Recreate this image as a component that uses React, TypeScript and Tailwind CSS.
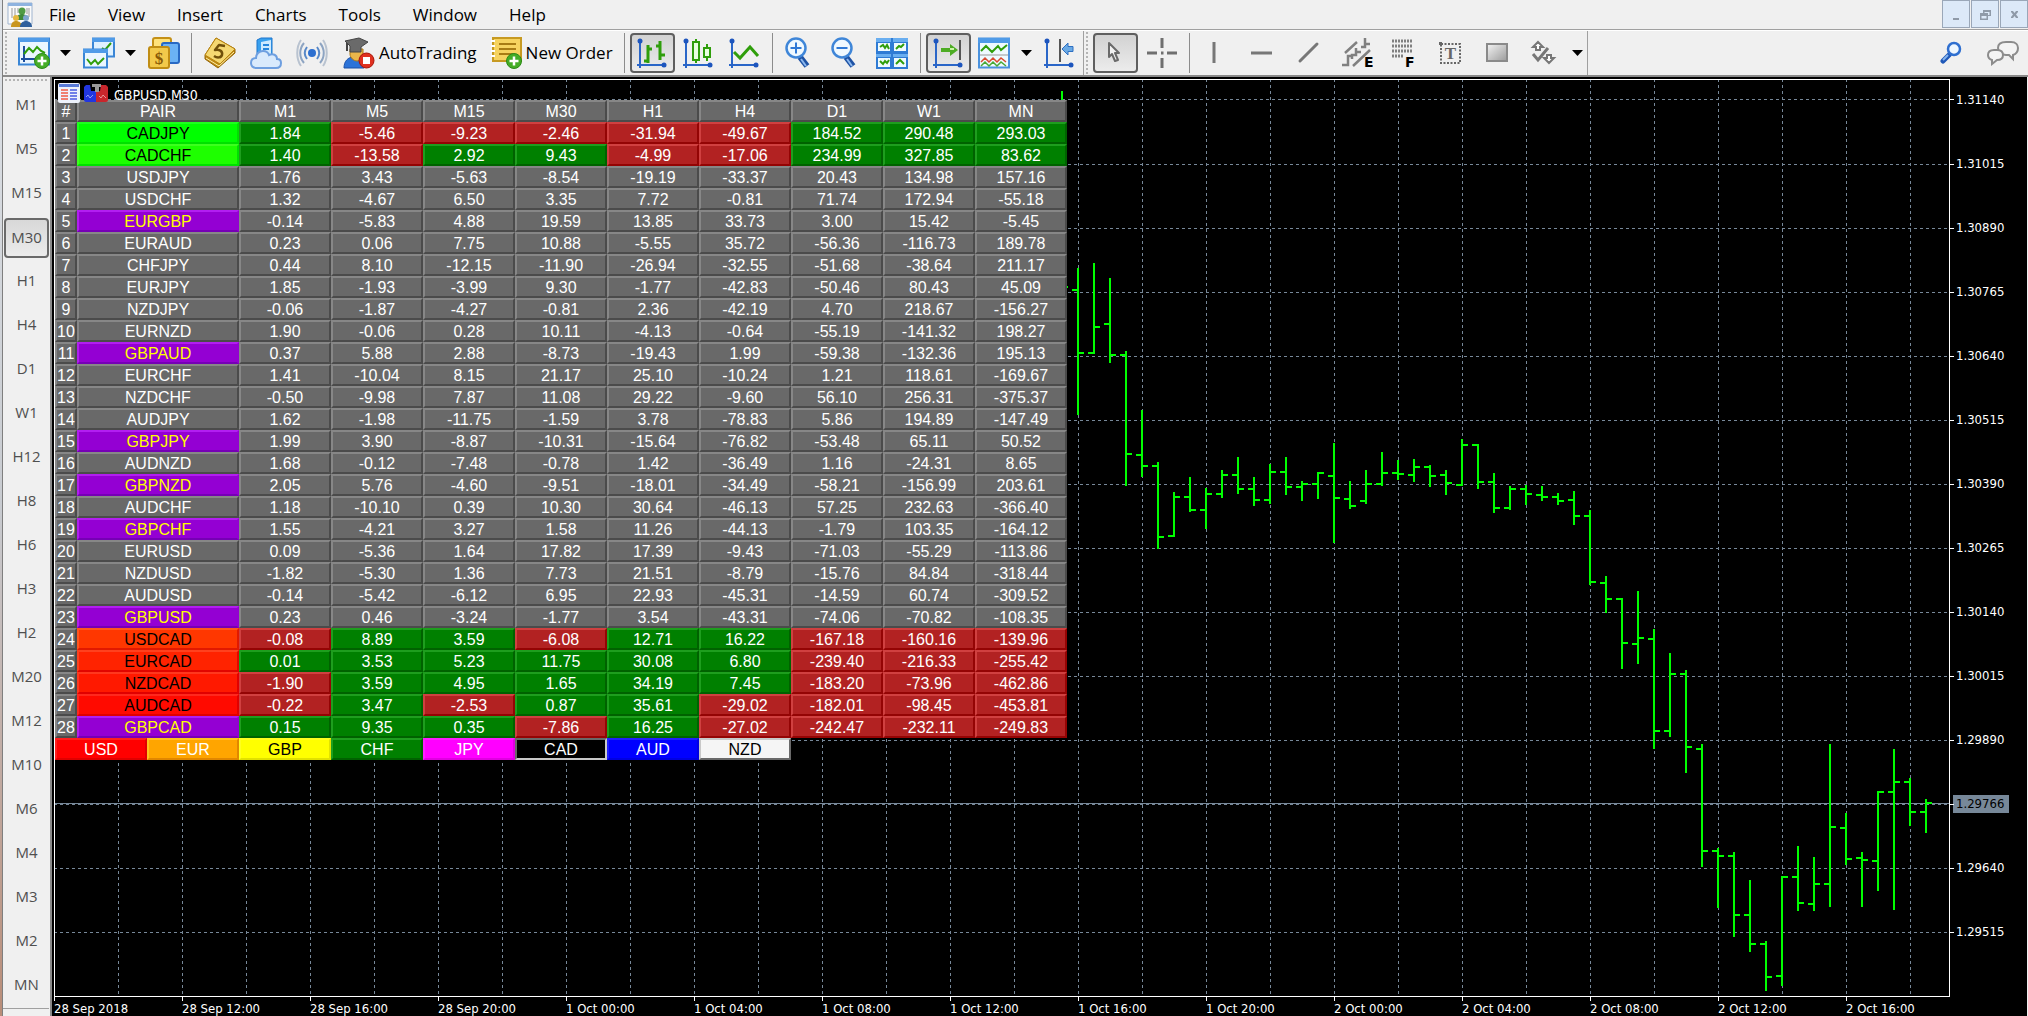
import { ReactNode } from "react";

type Tone = "flat" | "signal";
type PairRow = { pair: string; style: string; tone: Tone; values: string };

const GREY = "bg-[#696969] border-t-[#878787] border-l-[#878787] border-b-[#4b4b4b] border-r-[#4b4b4b] text-white";
const GREEN = "bg-[#008000] border-t-[#1e9e1e] border-l-[#1e9e1e] border-b-[#006200] border-r-[#006200] text-white";
const RED = "bg-[#b22222] border-t-[#d04040] border-l-[#d04040] border-b-[#940404] border-r-[#940404] text-white";
const PURPLE = "bg-[#9400d3] border-t-[#b21ef1] border-l-[#b21ef1] border-b-[#7600b5] border-r-[#9400d3] text-[#ffff00]";

const columns = ["M1", "M5", "M15", "M30", "H1", "H4", "D1", "W1", "MN"];

const rows: PairRow[] = [
    { pair: "CADJPY", tone: "signal", style: "bg-[#00ff00] border-t-[#1eff1e] border-l-[#1eff1e] border-b-[#00e100] border-r-[#00e100] text-black", values: "1.84 -5.46 -9.23 -2.46 -31.94 -49.67 184.52 290.48 293.03" },
    { pair: "CADCHF", tone: "signal", style: "bg-[#1eff00] border-t-[#3cff1e] border-l-[#3cff1e] border-b-[#00e100] border-r-[#00e100] text-black", values: "1.40 -13.58 2.92 9.43 -4.99 -17.06 234.99 327.85 83.62" },
    { pair: "USDJPY", tone: "flat", style: GREY, values: "1.76 3.43 -5.63 -8.54 -19.19 -33.37 20.43 134.98 157.16" },
    { pair: "USDCHF", tone: "flat", style: GREY, values: "1.32 -4.67 6.50 3.35 7.72 -0.81 71.74 172.94 -55.18" },
    { pair: "EURGBP", tone: "flat", style: PURPLE, values: "-0.14 -5.83 4.88 19.59 13.85 33.73 3.00 15.42 -5.45" },
    { pair: "EURAUD", tone: "flat", style: GREY, values: "0.23 0.06 7.75 10.88 -5.55 35.72 -56.36 -116.73 189.78" },
    { pair: "CHFJPY", tone: "flat", style: GREY, values: "0.44 8.10 -12.15 -11.90 -26.94 -32.55 -51.68 -38.64 211.17" },
    { pair: "EURJPY", tone: "flat", style: GREY, values: "1.85 -1.93 -3.99 9.30 -1.77 -42.83 -50.46 80.43 45.09" },
    { pair: "NZDJPY", tone: "flat", style: GREY, values: "-0.06 -1.87 -4.27 -0.81 2.36 -42.19 4.70 218.67 -156.27" },
    { pair: "EURNZD", tone: "flat", style: GREY, values: "1.90 -0.06 0.28 10.11 -4.13 -0.64 -55.19 -141.32 198.27" },
    { pair: "GBPAUD", tone: "flat", style: PURPLE, values: "0.37 5.88 2.88 -8.73 -19.43 1.99 -59.38 -132.36 195.13" },
    { pair: "EURCHF", tone: "flat", style: GREY, values: "1.41 -10.04 8.15 21.17 25.10 -10.24 1.21 118.61 -169.67" },
    { pair: "NZDCHF", tone: "flat", style: GREY, values: "-0.50 -9.98 7.87 11.08 29.22 -9.60 56.10 256.31 -375.37" },
    { pair: "AUDJPY", tone: "flat", style: GREY, values: "1.62 -1.98 -11.75 -1.59 3.78 -78.83 5.86 194.89 -147.49" },
    { pair: "GBPJPY", tone: "flat", style: PURPLE, values: "1.99 3.90 -8.87 -10.31 -15.64 -76.82 -53.48 65.11 50.52" },
    { pair: "AUDNZD", tone: "flat", style: GREY, values: "1.68 -0.12 -7.48 -0.78 1.42 -36.49 1.16 -24.31 8.65" },
    { pair: "GBPNZD", tone: "flat", style: PURPLE, values: "2.05 5.76 -4.60 -9.51 -18.01 -34.49 -58.21 -156.99 203.61" },
    { pair: "AUDCHF", tone: "flat", style: GREY, values: "1.18 -10.10 0.39 10.30 30.64 -46.13 57.25 232.63 -366.40" },
    { pair: "GBPCHF", tone: "flat", style: PURPLE, values: "1.55 -4.21 3.27 1.58 11.26 -44.13 -1.79 103.35 -164.12" },
    { pair: "EURUSD", tone: "flat", style: GREY, values: "0.09 -5.36 1.64 17.82 17.39 -9.43 -71.03 -55.29 -113.86" },
    { pair: "NZDUSD", tone: "flat", style: GREY, values: "-1.82 -5.30 1.36 7.73 21.51 -8.79 -15.76 84.84 -318.44" },
    { pair: "AUDUSD", tone: "flat", style: GREY, values: "-0.14 -5.42 -6.12 6.95 22.93 -45.31 -14.59 60.74 -309.52" },
    { pair: "GBPUSD", tone: "flat", style: PURPLE, values: "0.23 0.46 -3.24 -1.77 3.54 -43.31 -74.06 -70.82 -108.35" },
    { pair: "USDCAD", tone: "signal", style: "bg-[#ff3700] border-t-[#ff551e] border-l-[#ff551e] border-b-[#e11900] border-r-[#e11900] text-black", values: "-0.08 8.89 3.59 -6.08 12.71 16.22 -167.18 -160.16 -139.96" },
    { pair: "EURCAD", tone: "signal", style: "bg-[#ff2300] border-t-[#ff411e] border-l-[#ff411e] border-b-[#e10500] border-r-[#e10500] text-black", values: "0.01 3.53 5.23 11.75 30.08 6.80 -239.40 -216.33 -255.42" },
    { pair: "NZDCAD", tone: "signal", style: "bg-[#ff1900] border-t-[#ff371e] border-l-[#ff371e] border-b-[#e10000] border-r-[#e10000] text-black", values: "-1.90 3.59 4.95 1.65 34.19 7.45 -183.20 -73.96 -462.86" },
    { pair: "AUDCAD", tone: "signal", style: "bg-[#ff0a00] border-t-[#ff281e] border-l-[#ff281e] border-b-[#e10000] border-r-[#e10000] text-black", values: "-0.22 3.47 -2.53 0.87 35.61 -29.02 -182.01 -98.45 -453.81" },
    { pair: "GBPCAD", tone: "signal", style: PURPLE, values: "0.15 9.35 0.35 -7.86 16.25 -27.02 -242.47 -232.11 -249.83" },
];

const currencies = [
    { name: "USD", style: "bg-[#ff0000] border-t-[#ff1e1e] border-l-[#ff1e1e] border-b-[#e10000] border-r-[#e10000] text-white" },
    { name: "EUR", style: "bg-[#ffa500] border-t-[#ffc31e] border-l-[#ffc31e] border-b-[#e18700] border-r-[#e18700] text-white" },
    { name: "GBP", style: "bg-[#ffff00] border-t-[#ffff1e] border-l-[#ffff1e] border-b-[#e1e100] border-r-[#e1e100] text-black" },
    { name: "CHF", style: GREEN },
    { name: "JPY", style: "bg-[#ff00ff] border-t-[#ff1eff] border-l-[#ff1eff] border-b-[#e100e1] border-r-[#e100e1] text-white" },
    { name: "CAD", style: "bg-black border-t-[#696969] border-l-[#696969] border-b-[#c8c8c8] border-r-[#c8c8c8] text-white" },
    { name: "AUD", style: "bg-[#0000ff] border-t-[#1e1eff] border-l-[#1e1eff] border-b-[#0000e1] border-r-[#0000e1] text-white" },
    { name: "NZD", style: "bg-[#f5f5f5] border-t-[#c8c8c8] border-l-[#c8c8c8] border-b-[#696969] border-r-[#696969] text-black" },
];

const timeframes = ["M1", "M5", "M15", "M30", "H1", "H4", "D1", "W1", "H12", "H8", "H6", "H3", "H2", "M20", "M12", "M10", "M6", "M4", "M3", "M2", "MN"];

const prices = ["1.31140", "1.31015", "1.30890", "1.30765", "1.30640", "1.30515", "1.30390", "1.30265", "1.30140", "1.30015", "1.29890", "1.29766", "1.29640", "1.29515"];

const dates = ["28 Sep 2018", "28 Sep 12:00", "28 Sep 16:00", "28 Sep 20:00", "1 Oct 00:00", "1 Oct 04:00", "1 Oct 08:00", "1 Oct 12:00", "1 Oct 16:00", "1 Oct 20:00", "2 Oct 00:00", "2 Oct 04:00", "2 Oct 08:00", "2 Oct 12:00", "2 Oct 16:00"];

// high, low, open, close - one entry per 16 units, starting at x = 1077
const bars = [
    [268, 415, 290, 353], [263, 354, 353, 327], [278, 363, 324, 355], [351, 486, 355, 454], [410, 477, 455, 466],
    [462, 549, 466, 537], [492, 537, 536, 497], [477, 512, 497, 510], [488, 529, 510, 494], [470, 498, 494, 475],
    [457, 494, 475, 489], [477, 506, 489, 500], [464, 504, 500, 472], [457, 495, 472, 487], [481, 501, 487, 484],
    [472, 499, 484, 473], [443, 543, 476, 498], [481, 509, 499, 506], [470, 504, 501, 484], [452, 486, 484, 473],
    [460, 480, 473, 474], [459, 482, 475, 467], [465, 487, 467, 476], [470, 495, 475, 483], [439, 486, 485, 445],
    [444, 489, 445, 482], [473, 513, 482, 508], [486, 510, 508, 489], [485, 505, 489, 494], [486, 501, 495, 497],
    [493, 505, 497, 501], [491, 525, 500, 516], [510, 585, 516, 582], [576, 613, 583, 599], [598, 669, 599, 643],
    [591, 664, 644, 638], [629, 749, 639, 731], [653, 737, 731, 674], [670, 773, 674, 747], [744, 867, 749, 851],
    [848, 908, 851, 856], [852, 937, 856, 915], [880, 952, 915, 944], [941, 991, 944, 977], [876, 986, 976, 877],
    [846, 911, 877, 903], [857, 911, 904, 884], [744, 907, 884, 827], [813, 865, 828, 859], [852, 907, 858, 860],
    [791, 891, 861, 792], [749, 910, 792, 782], [778, 826, 782, 812], [799, 833, 812, 803],
];

export default function App() {
    return (
        <div className="flex h-screen min-h-[1016px] bg-[#f0f0f0] font-['Open_Sans',sans-serif] text-[17px] text-black">
            <div className="w-0.5 shrink-0 bg-linear-to-b from-[#dfe3e8] via-[#c8cbd0] to-[#b98d78]" />
            <div className="flex min-w-0 flex-1 flex-col border-l border-[#7f7f7f]">
                <MenuBar />
                <Toolbar />
                <div className="flex min-h-0 flex-1">
                    <Timeframes />
                    <Chart />
                </div>
            </div>
        </div>
    );
}

function MenuBar() {
    return (
        <header className="flex h-[30px] shrink-0 items-start justify-between border-b border-[#a0a0a0]">
            <div className="flex h-[29px] items-center">
                <div className="ml-1 flex w-[42px]"><AppIcon /></div>
                <nav className="flex gap-8">
                    {["File", "View", "Insert", "Charts", "Tools", "Window", "Help"].map((item) => (
                        <button key={item} className="leading-6">{item}</button>
                    ))}
                </nav>
            </div>
            <div className="flex gap-px">
                <WindowButton label="Minimize"><path d="M4 11h6v2H4z" /></WindowButton>
                <WindowButton label="Restore"><path d="M5 3h8v6h-3v4H2V6h3zM6.500 5v1h3.500v2h1.500V5zM3.500 9v2.500h5V9z" fillRule="evenodd" /></WindowButton>
                <WindowButton label="Close"><path d="M4 4h2l1.500 2L9 4h2v1L9 7.500l2 2.500v1H9L7.500 9 6 11H4v-1l2-2.500L4 5z" /></WindowButton>
            </div>
        </header>
    );
}

function WindowButton({ label, children }: { label: string; children: ReactNode }) {
    return (
        <button aria-label={label} className="flex h-7 w-7 items-center justify-center border border-[#9aa7b8] bg-[#dce9f8]">
            <svg width="15" height="15" viewBox="0 0 15 15" fill="#8f9aa8">{children}</svg>
        </button>
    );
}

function Toolbar() {
    return (
        <div className="flex h-[47px] shrink-0 items-center justify-between border-t border-b-2 border-t-white border-b-[#8a8a8a]">
            <div className="flex h-full items-center">
                <div className="flex h-full items-center gap-px pl-0.5">
                    <Grip />
                    <div className="flex"><Tool label="New chart"><NewChart /></Tool><DropArrow label="New chart list" /></div>
                    <div className="flex"><Tool label="Profiles"><Profiles /></Tool><DropArrow label="Profile list" /></div>
                    <Tool label="Symbols"><Symbols /></Tool>
                    <Separator />
                    <Tool label="Market"><Market /></Tool>
                    <Tool label="Virtual hosting"><Cloud /></Tool>
                    <Tool label="Signals"><Signals /></Tool>
                    <button className="flex h-10 items-center gap-1 pr-1 pl-2 whitespace-nowrap"><AutoIcon />AutoTrading</button>
                    <button className="flex h-10 items-center gap-1 pr-1.5 pl-2 whitespace-nowrap"><OrderIcon />New Order</button>
                    <Separator />
                    <Tool label="Bar chart" active><Axes><path d="M12 8v18M8 24h4M12 12h4M24 4v19M20 9h4M24 18h5" stroke="#2f9e0b" strokeWidth="3" /></Axes></Tool>
                    <Tool label="Candlesticks"><Axes><g fill="#e9ffe0" stroke="#2f9e0b" strokeWidth="2"><path d="M14 2v3M14 23v3M25 7v4M25 20v4" /><path d="M11 5h6v18h-6zM22 11h6v9h-6z" /></g></Axes></Tool>
                    <Tool label="Line chart"><Axes><path d="M6 15l6 6 10-11 8 9" stroke="#2f9e0b" strokeWidth="3" /></Axes></Tool>
                    <Separator />
                    <Tool label="Zoom in"><Magnifier plus /></Tool>
                    <Tool label="Zoom out"><Magnifier /></Tool>
                    <Tool label="Tile windows"><Tiles /></Tool>
                    <Separator />
                    <Tool label="Auto scroll" active><Axes><path d="M28 3v20" stroke="#555" strokeWidth="2" /><path d="M9 11h9V7l8 6-8 6v-4H9z" fill="#3da60f" opacity=".9" /><path d="M18 12h4" stroke="#c9f5a8" strokeWidth="2" /></Axes></Tool>
                    <div className="flex"><Tool label="Indicators"><Indicators /></Tool><DropArrow label="Indicator list" /></div>
                    <Tool label="Chart shift"><Axes><path d="M17 2v23" stroke="#555" strokeWidth="2" /><path d="M30 9.500h-5V6l-6 6 6 6v-3.500h5z" fill="#6aa9e4" stroke="#2d6fc2" /></Axes></Tool>
                </div>
                <div className="ml-px flex h-full items-center gap-0.5 border-r border-l border-[#a0a0a0] pl-0.5">
                    <Grip />
                    <Tool label="Cursor" active><svg width="32" height="32" viewBox="0 0 32 32"><path d="M10 6v14l3-3 3 7 3-1-3-7h4z" fill="#f2f2f2" stroke="#6a6a6a" strokeWidth="2" strokeLinejoin="round" /></svg></Tool>
                    <Tool label="Crosshair"><svg width="32" height="32" viewBox="0 0 32 32" stroke="#6f6f6f" strokeWidth="3"><path d="M16 1v10M16 21v10M1 16h10M21 16h10M15 16h2.500" /></svg></Tool>
                    <div className="mx-0.5 h-10 w-px bg-[#8c8c8c]" />
                    <Tool label="Vertical line"><svg width="32" height="32" viewBox="0 0 32 32"><path d="M14 5v21" stroke="#777" strokeWidth="3" /></svg></Tool>
                    <Tool label="Horizontal line"><svg width="32" height="32" viewBox="0 0 32 32"><path d="M4 16h21" stroke="#777" strokeWidth="3" /></svg></Tool>
                    <Tool label="Trend line"><svg width="32" height="32" viewBox="0 0 32 32"><path d="M6 24L23 7" stroke="#777" strokeWidth="3" strokeLinecap="round" /></svg></Tool>
                    <Tool label="Equidistant channel"><Channel /></Tool>
                    <Tool label="Fibonacci"><Fibo /></Tool>
                    <Tool label="Text"><TextTool /></Tool>
                    <Tool label="Rectangle"><RectTool /></Tool>
                    <div className="flex">
                        <Tool label="Arrows"><svg width="32" height="32" viewBox="0 0 32 32" fill="none" stroke="#777" strokeWidth="2"><path d="M9 5l5 5h-3v3H7v-3H4zM20 26l5-5h-3v-3h-4v3h-3z" fill="#fff" /><path d="M4 17l5 6L19 11" strokeWidth="3" /></svg></Tool>
                        <DropArrow label="Arrow list" />
                    </div>
                </div>
            </div>
            <div className="flex items-center gap-6 pr-2">
                <button aria-label="Search">
                    <svg width="22" height="24" viewBox="0 0 22 24" fill="none"><path d="M9 14l-6 6" stroke="#1f58b8" strokeWidth="5" strokeLinecap="round" /><path d="M8 14l-5 5" stroke="#86b5ee" strokeWidth="2" /><circle cx="14" cy="8" r="6" fill="#eef7ff" stroke="#2f6fd0" strokeWidth="2.500" /></svg>
                </button>
                <button aria-label="Chat">
                    <svg width="34" height="26" viewBox="0 0 34 26" fill="#f4f4f4" stroke="#8c8c8c" strokeWidth="2"><path d="M20 2h5c5 0 7 3 7 6s-2 6-5 7v4l-4-4h-3c-4 0-8-3-8-7s3-6 8-6z" /><path d="M8 10h3c4 0 6 2 6 5s-2 5-6 5l-5 4v-4c-3-1-4-3-4-5 0-3 2-5 6-5z" /></svg>
                </button>
            </div>
        </div>
    );
}

function Tool({ label, active, children }: { label: string; active?: boolean; children: ReactNode }) {
    return (
        <button
            aria-label={label}
            className={
                active
                    ? "flex h-10 w-[45px] items-center justify-center rounded border-2 border-[#5f5f5f] bg-linear-to-b from-[#d2d2d2] to-[#ececec]"
                    : "flex h-10 w-[45px] items-center justify-center"
            }
        >
            {children}
        </button>
    );
}

const Separator = () => <div className="mx-1 h-10 w-px bg-[#8c8c8c]" />;

const Grip = () => <div className="mr-[3px] h-[42px] border-l-2 border-dotted border-[#b4b4b4]" />;

function DropArrow({ label }: { label: string }) {
    return (
        <button aria-label={label} className="flex w-[19px] items-center justify-center">
            <svg width="11" height="6" viewBox="0 0 11 6"><path d="M0 0h11L5.500 6z" /></svg>
        </button>
    );
}

const Axes = ({ children }: { children: ReactNode }) => (
    <svg width="32" height="32" viewBox="0 0 32 32" fill="none">
        <path d="M4 4v27M1 28h28" stroke="#2a66c8" strokeWidth="2" />
        <g fill="#1d55bd"><circle cx="4" cy="4" r="2.500" /><circle cx="28" cy="28" r="2.500" /></g>
        {children}
    </svg>
);

const PlusBadge = () => (
    <g>
        <circle cx="24" cy="24" r="7.500" fill="#45ad27" stroke="#2c8a17" />
        <path d="M24 19.500v9M19.500 24h9" stroke="#fff" strokeWidth="2.500" />
    </g>
);

const NewChart = () => (
    <svg width="32" height="32" viewBox="0 0 32 32" fill="none">
        <rect x="1" y="1.500" width="30" height="26" fill="#eaf6ff" stroke="#3a86d6" strokeWidth="2" />
        <path d="M1 1h30v4H1z" fill="#4f9be8" />
        <path d="M6 9v16M3 22h16" stroke="#1d4f9e" strokeWidth="2" />
        <path d="M6 17l5-6 4 4 4-5 4 4 4 2" stroke="#2f9e0b" strokeWidth="2" />
        <PlusBadge />
    </svg>
);

const Profiles = () => (
    <svg width="32" height="32" viewBox="0 0 32 32" fill="none">
        <rect x="10" y="1.500" width="21" height="18" fill="#dff1ff" stroke="#3a86d6" strokeWidth="2" />
        <path d="M9 1h23v4H9z" fill="#4f9be8" />
        <path d="M19 11l3 2 6-7" stroke="#2f9e0b" strokeWidth="2" />
        <rect x="1" y="12.500" width="23" height="18" fill="#eaf6ff" stroke="#3a86d6" strokeWidth="2" />
        <path d="M0 12h25v4H0z" fill="#4f9be8" />
        <path d="M4 22l4 5 4-4 3 4 6-6" stroke="#2f9e0b" strokeWidth="2" />
    </svg>
);

const Symbols = () => (
    <svg width="32" height="32" viewBox="0 0 32 32" fill="none">
        <rect x="5" y="1" width="18" height="16" rx="2" fill="#ffe27a" stroke="#c49017" strokeWidth="2" />
        <rect x="14" y="6" width="17" height="20" rx="2" fill="#6bb2f5" stroke="#2869c4" strokeWidth="2" />
        <rect x="1" y="10" width="20" height="21" rx="2" fill="#f2c94a" stroke="#c08d14" strokeWidth="2" />
        <text x="11" y="27" textAnchor="middle" fontSize="17" fontWeight="700" fontFamily="Liberation Serif, serif" fill="#8a5a06">$</text>
    </svg>
);

const Market = () => (
    <svg width="32" height="32" viewBox="0 0 32 32" fill="none" strokeLinejoin="round">
        <path d="M12 1L1 18v4l13 9 17-15v-4z" fill="#c08a12" stroke="#95660a" />
        <path d="M12 1l19 11-15 15L1 18z" fill="#f5d872" stroke="#b98410" />
        <path d="M2 21l13 8 15-14" stroke="#fff0a8" />
        <path d="M21 9l-6-1-4 5c4-1 8 1 7 5-1 3-5 3-8 1" stroke="#71500a" strokeWidth="2.500" />
    </svg>
);

const Cloud = () => (
    <svg width="32" height="32" viewBox="0 0 32 32" fill="none">
        <path d="M7 3l4-2h11v19H7z" fill="#38a0ee" stroke="#1d74cc" />
        <path d="M11 5l10-2v15H11z" fill="#cdeaff" />
        <path d="M13 8h6M13 12h6" stroke="#2686dc" strokeWidth="2" />
        <path d="M7 31c-4 0-6-2-6-5s2-5 5-5c0-4 3-7 7-7 3 0 5 1 6 4 4-2 8 0 8 4 3 0 4 2 4 4 0 3-2 5-5 5z" fill="#d9eafc" stroke="#6e9fe0" strokeWidth="2" />
    </svg>
);

const Signals = () => (
    <svg width="32" height="32" viewBox="0 0 32 32" fill="none" strokeWidth="2">
        <circle cx="16" cy="16" r="4" fill="#2c6fd0" />
        <path d="M11 10c-3 4-3 8 0 12M21 10c3 4 3 8 0 12" stroke="#5788c8" />
        <path d="M8 6c-5 6-5 14 0 20M24 6c5 6 5 14 0 20" stroke="#8da4c2" />
        <path d="M5 3c-5 7-5 19 0 26M27 3c5 7 5 19 0 26" stroke="#b9c3d0" />
    </svg>
);

const AutoIcon = () => (
    <svg width="32" height="32" viewBox="0 0 32 32" fill="none">
        <path d="M1 31c0-7 4-11 10-11s10 4 10 11z" fill="#2c73d8" stroke="#1b51a8" />
        <path d="M7 12h13v5c0 4-3 7-6 7s-7-3-7-7z" fill="#eab64a" stroke="#a97617" />
        <path d="M2 4l14-3 9 4-7 5v5H7V9z" fill="#6a6a6a" stroke="#444" />
        <path d="M4 6v8" stroke="#444" strokeWidth="2" />
        <circle cx="23.500" cy="23.500" r="7.500" fill="#e03020" stroke="#a81508" />
        <path d="M20 20h7v7h-7z" fill="#fff" />
    </svg>
);

const OrderIcon = () => (
    <svg width="32" height="32" viewBox="0 0 32 32" fill="none">
        <path d="M3 1h28v23H3z" fill="#f6d360" stroke="#c79a22" strokeWidth="2" />
        <path d="M9 7h17M9 12h17M9 17h14" stroke="#a87c14" strokeWidth="2" />
        <path d="M1 4h4M1 9h4M1 14h4M1 19h4" stroke="#fff" strokeWidth="2" />
        <PlusBadge />
    </svg>
);

const Magnifier = ({ plus }: { plus?: boolean }) => (
    <svg width="32" height="32" viewBox="0 0 32 32" fill="none">
        <path d="M16 20l7 9" stroke="#1e52a4" strokeWidth="6" />
        <path d="M17 22l5 7" stroke="#8db9ef" strokeWidth="2" />
        <circle cx="12" cy="11" r="9.500" fill="#f0f9ff" stroke="#3f86d8" strokeWidth="2.500" />
        <path d={plus ? "M12 5.500v11M6.500 11h11" : "M6.500 11h11"} stroke="#2f79d6" strokeWidth="2" />
    </svg>
);

const Tiles = () => (
    <svg width="32" height="32" viewBox="0 0 32 32" fill="none">
        <path d="M0 1h32v31H0z" fill="#2f7bd4" />
        <path d="M0 1h15v4H0zM17 1h15v4H17zM0 17h15v3H0zM17 17h15v3H17z" fill="#69aef0" />
        <path d="M2 6h12v8H2zM18 6h12v8H18zM2 21h12v9H2zM18 21h12v9H18z" fill="#effaff" />
        <path d="M4 10l3-2 2 3 2-3 2 4M20 12l3-3 2 1 3-3M4 24l3 3 2-3 2 2 2-3M20 27l4-4 4 4" stroke="#2f9e0b" strokeWidth="2" />
    </svg>
);

const Indicators = () => (
    <svg width="32" height="32" viewBox="0 0 32 32" fill="none">
        <path d="M1 1.500h30v29H1z" fill="#eefaff" stroke="#4a92de" strokeWidth="2" />
        <path d="M0 1h32v5H0z" fill="#4f9be8" />
        <path d="M3 14l5-5 6 6 6-6 3 4 6-5" stroke="#2f9e0b" strokeWidth="2" />
        <path d="M2 18h28" stroke="#999" />
        <path d="M3 25l4-4 4 4 4-4 4 4 4-4 5 4" stroke="#d94a30" strokeWidth="1.500" />
        <path d="M3 29l4-4 4 4 4-4 4 4 4-4 5 4" stroke="#49a835" strokeWidth="1.500" />
    </svg>
);

const Channel = () => (
    <svg width="32" height="32" viewBox="0 0 32 32" fill="none" stroke="#808080" strokeWidth="2.500">
        <path d="M4 16L16 5M12 29l17-16" />
        <path d="M1 28h6v-9h4M11 22v-4h4v-7M15 15h5M20 10h4V1M24 7h5" />
        <text x="23" y="30" fontSize="14" fontWeight="700" fontFamily="DejaVu Sans, sans-serif" fill="#000" stroke="none">E</text>
    </svg>
);

const Fibo = () => (
    <svg width="32" height="32" viewBox="0 0 32 32" fill="none">
        <path d="M4 4h21M4 9h21M4 14h21M4 19h11" stroke="#808080" strokeWidth="3" strokeDasharray="2 1" />
        <text x="17" y="30" fontSize="14" fontWeight="700" fontFamily="DejaVu Sans, sans-serif" fill="#000">F</text>
    </svg>
);

const TextTool = () => (
    <svg width="32" height="32" viewBox="0 0 32 32" fill="none">
        <path d="M6 7h19v19H6z" stroke="#666" strokeWidth="2" strokeDasharray="2 1.500" />
        <path d="M4 5h3v3H4z" fill="#666" />
        <text x="15.500" y="22" textAnchor="middle" fontSize="17" fontWeight="700" fontFamily="Liberation Serif, serif" fill="#666">T</text>
    </svg>
);

const RectTool = () => (
    <svg width="32" height="32" viewBox="0 0 32 32">
        <defs><linearGradient id="rect-fill" x1="0" y1="0" x2="1" y2="1"><stop stopColor="#f4f4f4" /><stop offset="1" stopColor="#9a9a9a" /></linearGradient></defs>
        <rect x="5" y="7" width="20" height="17" fill="url(#rect-fill)" stroke="#8a8a8a" strokeWidth="2" />
    </svg>
);

const AppIcon = () => (
    <svg width="26" height="26" viewBox="0 0 26 26">
        <path d="M1 1h24v21H1z" fill="#fafafa" stroke="#9fb4cf" />
        <path d="M1 1h24v3H1z" fill="#8fb3df" />
        <path d="M5 6v10M8 6v8M11 6v5M20 6v6M22 6v9" stroke="#999" />
        <circle cx="15" cy="9" r="3.500" fill="#4f9b45" />
        <path d="M9 18c0-4 3-6 6-6s6 2 6 6z" fill="#3f8a3a" />
        <circle cx="9" cy="16" r="3" fill="#e5b83e" />
        <path d="M4 25c0-4 2-6 5-6s6 2 6 6z" fill="#c9961f" />
        <circle cx="19" cy="16" r="3" fill="#7fa6cf" />
        <path d="M13 25c0-4 3-6 6-6s6 2 6 6z" fill="#2f5f9c" />
    </svg>
);

function Timeframes() {
    return (
        <aside className="flex w-[49px] shrink-0 flex-col border-r-2 border-[#8a8a8a] pr-px text-[15px] text-[#4f4f4f]">
            <div className="mx-0.5 mt-0.5 border-t-2 border-dotted border-[#b4b4b4]" />
            <div className="flex flex-col gap-1 pt-[5px]">
                {timeframes.map((tf) => (
                    <button
                        key={tf}
                        className={
                            tf == "M30"
                                ? "ml-px h-10 w-[45px] rounded border-2 border-[#6a6a6a] bg-linear-to-b from-[#d8d8d8] to-[#ececec] pb-0.5"
                                : "ml-px h-10 w-[45px] pb-1"
                        }
                    >
                        {tf}
                    </button>
                ))}
            </div>
            <div className="mt-auto mb-[7px] border-t border-[#a0a0a0]" />
        </aside>
    );
}

function Chart() {
    return (
        <main className="mr-px grid min-w-0 flex-1 grid-cols-[minmax(0,1fr)_77px] grid-rows-[minmax(0,1fr)_19px] bg-black pt-0.5 pl-0.5 font-['DejaVu_Sans_Condensed','DejaVu_Sans',sans-serif] text-[13px] text-white">
            <div className="relative min-h-0">
                <Plot />
                <div className="absolute top-0 left-0 pl-px">
                    <div className="flex h-[21px] items-start gap-1 pt-1 pl-[3px]">
                        <svg className="relative z-10" width="22" height="20" viewBox="0 0 22 20">
                            <rect width="22" height="20" rx="2" fill="#eef2fb" />
                            <path d="M1 1h20v3H1z" fill="#5a7bd8" />
                            <path d="M3 7h7M3 10h7M3 13h7M3 16h7" stroke="#f08070" strokeWidth="2" />
                            <path d="M12 7h7M12 10h7M12 13h7M12 16h7" stroke="#7080e8" strokeWidth="2" />
                        </svg>
                        <svg className="relative z-10" width="24" height="19" viewBox="0 0 24 19">
                            <path d="M2 2h4l1 6h5v11H2c-1 0-2-1-2-2V4z" fill="#2236e0" />
                            <path d="M22 2h-5l-1 6h-4v11h10c1 0 2-1 2-2V4z" fill="#c8262c" />
                            <path d="M8 1h9v3h-2v5h-4V4H8z" fill="#999" />
                            <path d="M2 14l2-2 2 3 3-3M15 13l2 2 2-3 3 3" stroke="#fff" fill="none" opacity=".5" />
                        </svg>
                        <span className="pt-1 pl-0.5 text-sm leading-4">GBPUSD.M30</span>
                    </div>
                    <PairTable />
                </div>
            </div>
            <div className="flex flex-col pt-[11px] pl-[3px]">
                {prices.map((price) => (
                    <div key={price} className="h-16">
                        <span className={price == "1.29766" ? "inline-block bg-[#778899] pr-[5px] pl-[3px] leading-[18px] text-black" : "inline-block pl-[3px] leading-[18px]"}>{price}</span>
                    </div>
                ))}
            </div>
            <div className="col-span-2 flex overflow-hidden">
                {dates.map((date) => (
                    <span key={date} className="w-32 shrink-0 pt-1 leading-4 whitespace-nowrap">{date}</span>
                ))}
            </div>
        </main>
    );
}

function Plot() {
    const gridY = [99, ...Array.from({ length: 13 }, (_, i) => 164 + i * 64)];
    const gridX = Array.from({ length: 29 }, (_, i) => 118 + i * 64);
    return (
        <svg className="block h-full w-full overflow-visible" viewBox="54 79 1896 918" preserveAspectRatio="none" shapeRendering="crispEdges">
            <g stroke="#778899" strokeDasharray="3 3">
                {gridY.map((y) => <line key={y} x1="54" x2="1949" y1={y + 0.5} y2={y + 0.5} />)}
                {gridX.map((x) => <line key={x} x1={x + 0.5} x2={x + 0.5} y1="79" y2="996" />)}
            </g>
            <path d="M54 803.500H1949" stroke="#778899" />
            <g fill="#00ff00">
                <path d="M1061 91h2v30h-2zM1063 286h5v2h-5z" />
                {bars.map(([high, low, open, close], i) => {
                    const x = 1077 + i * 16;
                    return (
                        <g key={x}>
                            <rect x={x} y={high} width="2" height={low - high} />
                            {/* open tick goes left, close tick goes right */}
                            <rect x={x - 5} y={open - 1} width="6" height="2" />
                            <rect x={x} y={close - 1} width="7" height="2" />
                        </g>
                    );
                })}
            </g>
            <path d="M54.500 79.500H1949.500V996.500H54.500z" fill="none" stroke="#fff" />
            <g stroke="#fff">
                {gridY.map((y) => <line key={y} x1="1950" x2="1954" y1={y + 0.5} y2={y + 0.5} />)}
                {dates.map((date, i) => <line key={date} x1={54.5 + i * 128} x2={54.5 + i * 128} y1="997" y2="1001" />)}
            </g>
        </svg>
    );
}

function PairTable() {
    return (
        <div className="relative font-['Liberation_Sans',Arial,sans-serif] text-base leading-[17px]">
            <table className="w-[1012px] table-fixed border-separate border-spacing-0 text-center">
                <colgroup>
                    <col className="w-[22px]" />
                    <col className="w-[162px]" />
                </colgroup>
                <thead>
                    <tr>
                        {["#", "PAIR", ...columns].map((name) => (
                            <th key={name} className={`border-2 pt-px font-normal ${GREY}`}>{name}</th>
                        ))}
                    </tr>
                </thead>
                <tbody>
                    {rows.map(({ pair, style, tone, values }, i) => (
                        <tr key={pair}>
                            <td className={`border-2 pt-px ${GREY}`}><span className="-mx-1">{i + 1}</span></td>
                            <td><button className={`block w-full border-2 pt-px ${style}`}>{pair}</button></td>
                            {values.split(" ").map((value, col) => (
                                <td key={columns[col]} className={`border-2 pt-px ${tone == "flat" ? GREY : value.startsWith("-") ? RED : GREEN}`}>{value}</td>
                            ))}
                        </tr>
                    ))}
                </tbody>
            </table>
            <div className="flex">
                {currencies.map(({ name, style }) => (
                    <button key={name} className={`w-[92px] border-2 pt-px ${style}`}>{name}</button>
                ))}
            </div>
        </div>
    );
}
